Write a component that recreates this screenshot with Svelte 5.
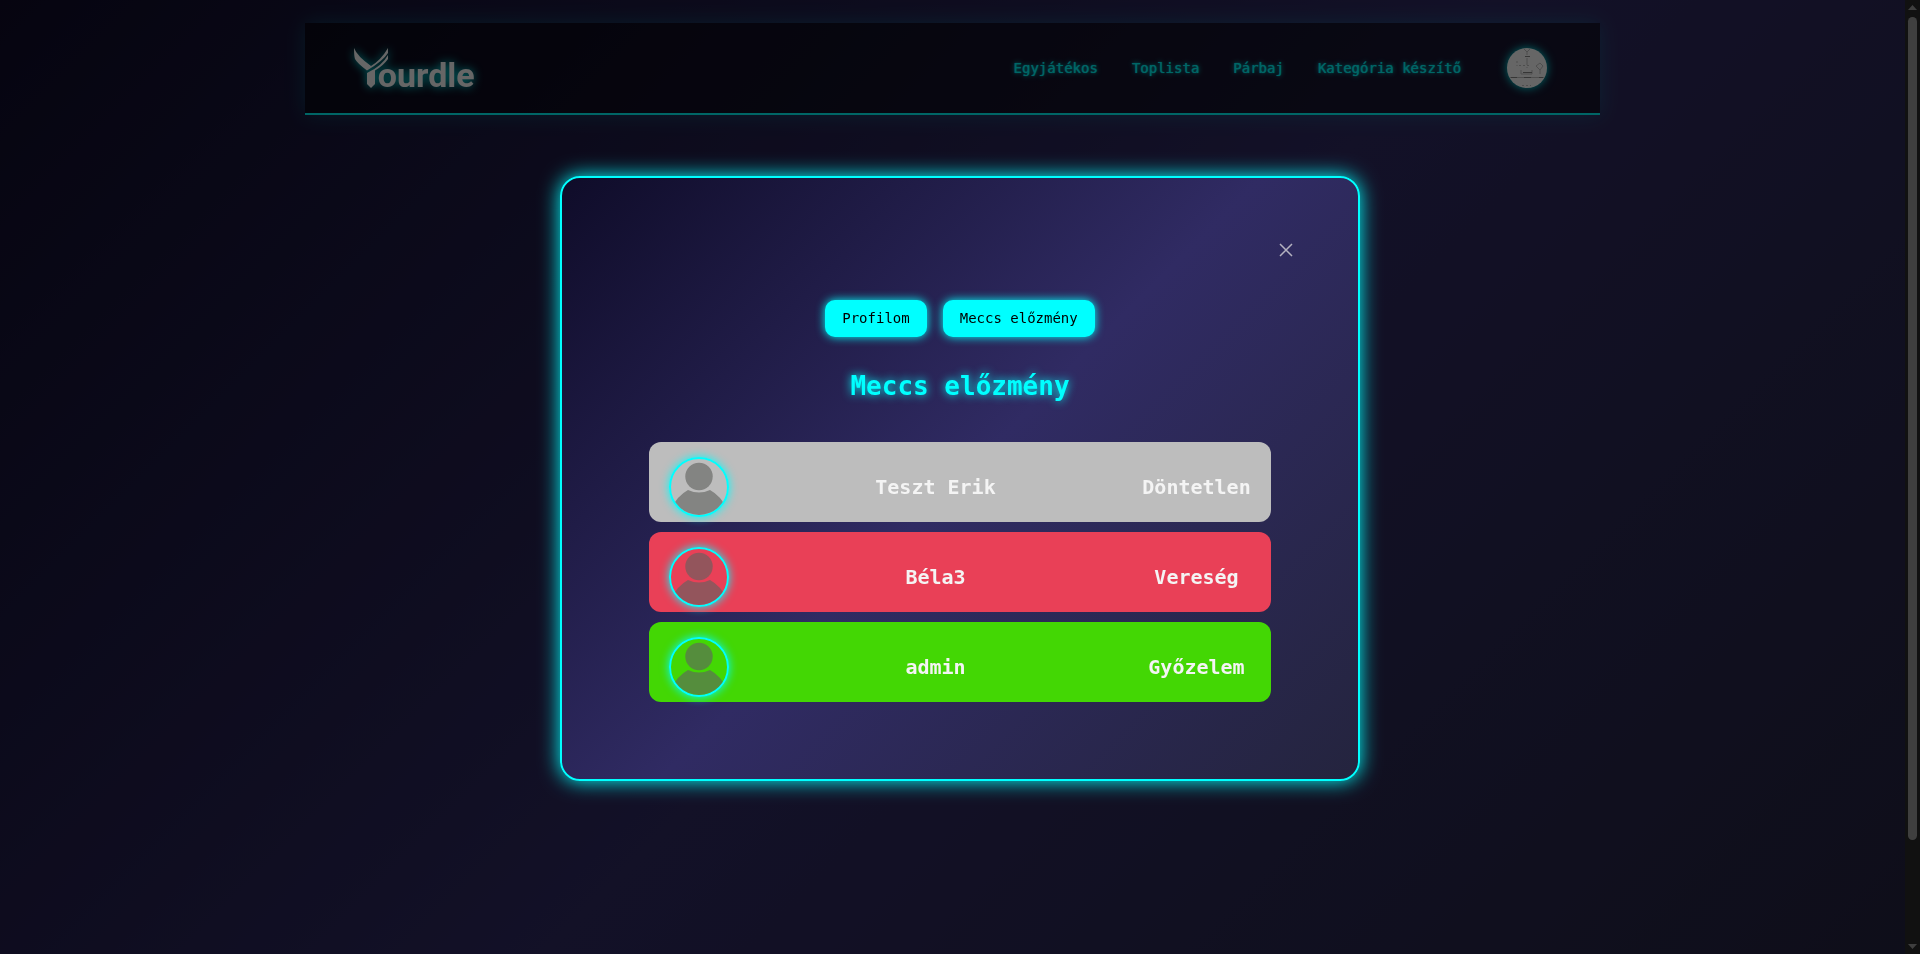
<script>
  const links = ['Egyjátékos', 'Toplista', 'Párbaj', 'Kategória készítő'];
  const matches = [
    { name: 'Teszt Erik', result: 'Döntetlen', kind: 'draw' },
    { name: 'Béla3', result: 'Vereség', kind: 'loss' },
    { name: 'admin', result: 'Győzelem', kind: 'win' }
  ];
</script>

<div class="page">
  <header>
    <a class="logo" href="#home" aria-label="Yourdle">
      <svg width="37" height="41" viewBox="0 0 37 41" aria-hidden="true">
        <path d="M1 0 Q4 8 18 18 Q28 12 35 0 V5 Q30 13 14 22.500 Q4 15 2 11 Q1 8 1 0Z" />
        <path d="M35 7 V11 Q30 18 22 22.500 V36 L18 40 L14 36 V25 Q29 18 35 7Z" />
      </svg>
      <span>ourdle</span>
    </a>
    <nav>
      {#each links as link}
        <a href="#menu">{link}</a>
      {/each}
      <button class="me" aria-label="Profil">
        <svg width="40" height="40" viewBox="0 0 40 40" aria-hidden="true">
          <g fill="none" stroke="#c4c4c4" stroke-width="1">
            <path d="M17 1l3 3 3-3M20 4v3M20 10v5M14 22v4h11v-4M3 29.500h34M33 15l3 3-3 4-4-4zM33 22v4" />
            <path d="M18 8.500h5M16 24.500h9M4 29.500h6M32 29.500h4M17 29.500h7" stroke="#888" />
            <path d="M10 13v5M12 17.500h12M15 37.500h9M20 15v5" stroke-dasharray="2 2" />
          </g>
        </svg>
      </button>
    </nav>
  </header>
  <div class="scrollbar" aria-hidden="true">
    <svg width="9" height="5" viewBox="0 0 9 5"><path d="M0 5L4.500 0 9 5z" /></svg>
    <div class="track"><div class="thumb"></div></div>
    <svg width="9" height="5" viewBox="0 0 9 5"><path d="M0 0L4.500 5 9 0z" /></svg>
  </div>
</div>

<div class="overlay">
  <div class="modal" role="dialog" aria-modal="true" aria-labelledby="title">
    <button class="close" aria-label="Bezárás">
      <svg width="14" height="14" viewBox="0 0 14 14" aria-hidden="true"><path d="M1 1l12 12M13 1L1 13" /></svg>
    </button>
    <div class="content">
      <div class="tabs">
        <button>Profilom</button>
        <button>Meccs előzmény</button>
      </div>
      <h1 id="title">Meccs előzmény</h1>
      <ul>
        {#each matches as match}
          <li class={match.kind}>
            <svg class="avatar" viewBox="0 0 56 56" aria-hidden="true">
              <circle cx="28" cy="17.500" r="13.700" />
              <path d="M0 50 Q6 37 17 31 Q28 36 39 31 Q50 37 56 50V56H0Z" />
            </svg>
            <span class="name">{match.name}</span>
            <span class="result">{match.result}</span>
          </li>
        {/each}
      </ul>
    </div>
  </div>
</div>

<style>
  :global(body) {
    margin: 0;
    background: #0f0c29;
  }
  .page, .overlay {
    box-sizing: border-box;
    font-family: 'DejaVu Sans Mono', 'Liberation Mono', monospace;
  }
  button {
    padding: 0;
    border: 0;
    font: inherit;
    cursor: pointer;
  }
  .page {
    position: relative;
    min-height: 100vh;
    padding: 23px 15px 0 0;
    background: linear-gradient(135deg, #0f0c29, #302b63, #24243e) 0 0 / 100% 112vh;
  }
  header {
    box-sizing: border-box;
    display: flex;
    align-items: center;
    justify-content: space-between;
    width: 68%;
    margin: 0 auto;
    padding: 25px 53px 25px 48px;
    border-bottom: 2px solid #0ff;
    background: rgba(0, 0, 0, 0.5);
    box-shadow: 0 0 20px rgba(0, 255, 255, 0.2);
  }
  .logo {
    display: flex;
    height: 40px;
    color: #fff;
    text-decoration: none;
    filter: drop-shadow(0 0 5px #0ff);
  }
  .logo svg {
    fill: #fff;
    margin-right: -12px;
  }
  .logo span {
    padding-top: 9px;
    font: 700 34px/36px Roboto, sans-serif;
  }
  nav {
    display: flex;
    align-items: center;
    gap: 34px;
  }
  nav a {
    color: #0ff;
    font-size: 14px;
    text-decoration: none;
    text-shadow: 0 0 1px #0ff, 0 0 5px #0ff;
  }
  .me {
    width: 40px;
    height: 40px;
    margin-left: 12px;
    border-radius: 50%;
    overflow: hidden;
    background: #fff;
    box-shadow: 0 0 10px #0ff;
  }
  .me svg {
    display: block;
  }
  .scrollbar {
    position: fixed;
    inset: 0 0 0 auto;
    box-sizing: border-box;
    display: flex;
    flex-direction: column;
    align-items: center;
    gap: 7px;
    width: 15px;
    padding: 5px 0;
    background: #2c2c2c;
  }
  .scrollbar svg {
    fill: #9f9f9f;
  }
  .track {
    flex: 1;
    width: 9px;
  }
  .thumb {
    height: 89.5%;
    border-radius: 5px;
    background: #9f9f9f;
  }
  .overlay {
    position: fixed;
    inset: 0;
    display: flex;
    align-items: flex-start;
    justify-content: center;
    padding: 176px 20px 20px;
    background: rgba(0, 0, 0, 0.6);
  }
  .modal {
    box-sizing: border-box;
    display: flex;
    flex-direction: column;
    width: 100%;
    max-width: 800px;
    padding: 50px;
    border: 2px solid #0ff;
    border-radius: 20px;
    background: linear-gradient(135deg, #0f0c29, #302b63, #24243e);
    box-shadow: 0 0 20px #0ff;
  }
  .close {
    display: grid;
    place-items: center;
    align-self: flex-end;
    width: 44px;
    height: 44px;
    background: none;
  }
  .close svg {
    fill: none;
    stroke: #b4b2c0;
    stroke-width: 1.500;
  }
  .content {
    padding: 28px 37px 27px;
  }
  .tabs {
    display: flex;
    justify-content: center;
    gap: 16px;
  }
  .tabs button {
    height: 37px;
    padding: 0 17px 2px;
    border-radius: 10px;
    background: #0ff;
    color: #000;
    font-size: 14px;
    box-shadow: 0 0 10px #0ff;
  }
  h1 {
    margin: 29px 0 36px;
    color: #0ff;
    font-size: 26px;
    line-height: 40px;
    text-align: center;
    text-shadow: 0 0 10px #0ff;
  }
  ul {
    display: flex;
    flex-direction: column;
    gap: 10px;
    margin: 0;
    padding: 0;
    list-style: none;
  }
  li {
    display: flex;
    align-items: center;
    padding: 15px 20px 5px;
    border-radius: 12px;
    color: #f4f4f4;
    font-size: 20px;
    font-weight: 700;
  }
  .draw {
    background: #bdbdbd;
  }
  .loss {
    background: #e94057;
  }
  .win {
    background: #43d704;
  }
  .avatar {
    width: 56px;
    height: 56px;
    border: 2px solid #0ff;
    border-radius: 50%;
    fill: rgba(97, 98, 95, 0.63);
    box-shadow: 0 0 10px #0ff;
  }
  .name {
    flex: 1;
    text-align: center;
  }
  .result {
    min-width: 109px;
    text-align: center;
  }
</style>
